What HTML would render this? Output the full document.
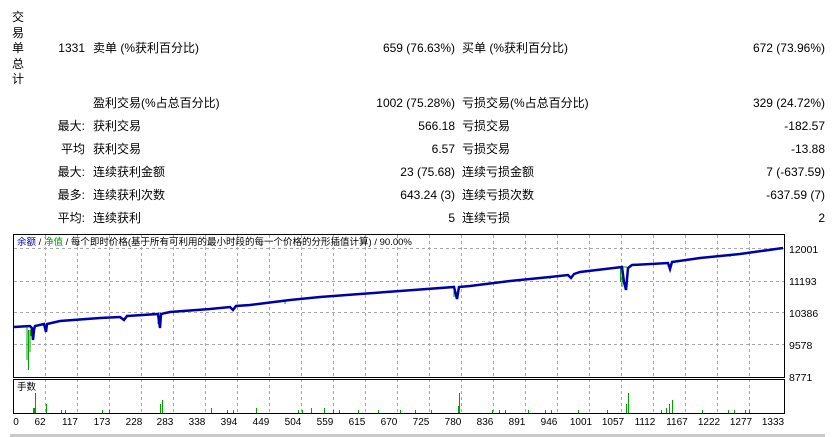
<!DOCTYPE html>
<html><head><meta charset="utf-8"><style>
body{margin:0;width:835px;height:437px;background:#fff;overflow:hidden;position:relative;font-family:"Liberation Sans","Noto Sans CJK SC",sans-serif;font-size:12px;color:#000}
.t{position:absolute;white-space:nowrap;line-height:14px}
.r{text-align:right}
</style></head><body>
<div class="t" style="left:12px;top:10px;width:14px;line-height:15.5px">交<br>易<br>单<br>总<br>计</div>

<div class="t r" style="right:750px;top:41px">1331</div>
<div class="t" style="left:93px;top:41px">卖单 (%获利百分比)</div>
<div class="t r" style="right:380px;top:41px">659 (76.63%)</div>
<div class="t" style="left:462px;top:41px">买单 (%获利百分比)</div>
<div class="t r" style="right:10px;top:41px">672 (73.96%)</div>

<div class="t" style="left:93px;top:96px">盈利交易(%占总百分比)</div>
<div class="t r" style="right:380px;top:96px">1002 (75.28%)</div>
<div class="t" style="left:462px;top:96px">亏损交易(%占总百分比)</div>
<div class="t r" style="right:10px;top:96px">329 (24.72%)</div>

<div class="t r" style="right:750px;top:119px">最大:</div>
<div class="t" style="left:93px;top:119px">获利交易</div>
<div class="t r" style="right:380px;top:119px">566.18</div>
<div class="t" style="left:462px;top:119px">亏损交易</div>
<div class="t r" style="right:10px;top:119px">-182.57</div>

<div class="t r" style="right:750px;top:142px">平均</div>
<div class="t" style="left:93px;top:142px">获利交易</div>
<div class="t r" style="right:380px;top:142px">6.57</div>
<div class="t" style="left:462px;top:142px">亏损交易</div>
<div class="t r" style="right:10px;top:142px">-13.88</div>

<div class="t r" style="right:750px;top:165px">最大:</div>
<div class="t" style="left:93px;top:165px">连续获利金额</div>
<div class="t r" style="right:380px;top:165px">23 (75.68)</div>
<div class="t" style="left:462px;top:165px">连续亏损金额</div>
<div class="t r" style="right:10px;top:165px">7 (-637.59)</div>

<div class="t r" style="right:750px;top:188px">最多:</div>
<div class="t" style="left:93px;top:188px">连续获利次数</div>
<div class="t r" style="right:380px;top:188px">643.24 (3)</div>
<div class="t" style="left:462px;top:188px">连续亏损次数</div>
<div class="t r" style="right:10px;top:188px">-637.59 (7)</div>

<div class="t r" style="right:750px;top:211px">平均:</div>
<div class="t" style="left:93px;top:211px">连续获利</div>
<div class="t r" style="right:380px;top:211px">5</div>
<div class="t" style="left:462px;top:211px">连续亏损</div>
<div class="t r" style="right:10px;top:211px">2</div>

<svg style="position:absolute;left:0;top:0" width="835" height="437">
<g stroke="#a8a8a8" stroke-dasharray="3,3" stroke-width="1" fill="none">
<path d="M14 248.5H784M14 281.5H784M14 312.5H784M14 344.5H784"/>
<path d="M45.5 235V413M77.5 235V413M109.5 235V413M141.5 235V413M173.5 235V413M205.5 235V413M237.5 235V413M269.5 235V413M301.5 235V413M333.5 235V413M365.5 235V413M397.5 235V413M429.5 235V413M461.5 235V413M493.5 235V413M525.5 235V413M557.5 235V413M589.5 235V413M621.5 235V413M653.5 235V413M685.5 235V413M717.5 235V413M749.5 235V413"/>
</g>
<rect x="14" y="378" width="770" height="1" fill="#fff"/>
<rect x="13.5" y="234.5" width="771" height="143" fill="none" stroke="#000"/>
<rect x="13.5" y="379.5" width="771" height="34" fill="none" stroke="#000"/>
<!-- equity green spikes -->
<g fill="none" stroke="#00a000" stroke-width="1">
<path d="M27 327V360M28.5 330V370M30 330V352M31 328V336"/>
<path d="M158 314V324"/>
<path d="M454 288V297"/>
<path d="M620.5 267V282M622 270V287M623 267H627"/>
<path d="M285 301V304M550 276V279M730 254V257"/>
</g>
<!-- balance blue -->
<polyline fill="none" stroke="#0000aa" stroke-width="2.5" points="14,327 30,326 32,328 33,340 34,330 35,326 44,324 46,332 47,324 60,321 100,318 120,317 124,320 127,316 158,314 160,328 161,314 170,312 210,309 230,307 233,310 236,306 250,305 290,300 320,297 360,294 400,291 454,287 457,299 459,287 470,286 510,281 550,277 568,275 571,278 574,274 580,272 622,267 624,282 626,290 628,268 632,265 668,263 670,269 672,262 700,258 740,254 783,248"/>
<!-- volume bars -->
<g fill="#00a000">
<rect x="33" y="408" width="2" height="5"/><rect x="35" y="393" width="1" height="20"/><rect x="46" y="404" width="1" height="9"/><rect x="61" y="410" width="1" height="3"/><rect x="65" y="410" width="1" height="3"/><rect x="102" y="410" width="1" height="3"/><rect x="109" y="410" width="1" height="3"/><rect x="160" y="404" width="1" height="9"/><rect x="162" y="400" width="1" height="13"/><rect x="211" y="408" width="1" height="5"/><rect x="227" y="410" width="1" height="3"/><rect x="233" y="410" width="1" height="3"/><rect x="256" y="408" width="1" height="5"/><rect x="298" y="410" width="1" height="3"/><rect x="302" y="410" width="1" height="3"/><rect x="311" y="408" width="1" height="5"/><rect x="324" y="408" width="1" height="5"/><rect x="333" y="410" width="1" height="3"/><rect x="339" y="410" width="1" height="3"/><rect x="358" y="410" width="1" height="3"/><rect x="378" y="410" width="1" height="3"/><rect x="400" y="410" width="1" height="3"/><rect x="415" y="410" width="1" height="3"/><rect x="431" y="410" width="1" height="3"/><rect x="458" y="406" width="1" height="7"/><rect x="459" y="393" width="1" height="20"/><rect x="492" y="410" width="1" height="3"/><rect x="499" y="410" width="1" height="3"/><rect x="505" y="410" width="1" height="3"/><rect x="528" y="410" width="1" height="3"/><rect x="545" y="410" width="1" height="3"/><rect x="551" y="410" width="1" height="3"/><rect x="578" y="410" width="1" height="3"/><rect x="607" y="410" width="1" height="3"/><rect x="626" y="404" width="1" height="9"/><rect x="628" y="393" width="1" height="20"/><rect x="661" y="410" width="1" height="3"/><rect x="666" y="408" width="1" height="5"/><rect x="669" y="404" width="1" height="9"/><rect x="672" y="400" width="1" height="13"/><rect x="702" y="410" width="1" height="3"/><rect x="728" y="410" width="1" height="3"/><rect x="734" y="410" width="1" height="3"/><rect x="745" y="410" width="1" height="3"/><rect x="749" y="410" width="1" height="3"/>
</g>
<g font-family="Liberation Sans,Noto Sans CJK SC,sans-serif" font-size="9.5">
<text x="17" y="245"><tspan fill="#0000aa">余额</tspan> / <tspan fill="#00a000">净值</tspan> / 每个即时价格(基于所有可利用的最小时段的每一个价格的分形插值计算) / 90.00%</text>
<text x="17" y="390">手数</text>
</g>
<g font-family="Liberation Sans,sans-serif" font-size="10.5" fill="#000">
<text x="789" y="253">12001</text><text x="789" y="285">11193</text><text x="789" y="317">10386</text><text x="789" y="349">9578</text><text x="789" y="381">8771</text>
</g>
<g font-family="Liberation Sans,sans-serif" font-size="10" text-anchor="middle">
<text x="16" y="425">0</text><text x="40" y="425">62</text><text x="70" y="425">117</text><text x="102" y="425">173</text><text x="134" y="425">228</text><text x="165" y="425">283</text><text x="197" y="425">338</text><text x="229" y="425">394</text><text x="261" y="425">449</text><text x="293" y="425">504</text><text x="325" y="425">559</text><text x="357" y="425">615</text><text x="389" y="425">670</text><text x="421" y="425">725</text><text x="453" y="425">780</text><text x="485" y="425">836</text><text x="517" y="425">891</text><text x="549" y="425">946</text><text x="581" y="425">1001</text><text x="613" y="425">1057</text><text x="645" y="425">1112</text><text x="677" y="425">1167</text><text x="709" y="425">1222</text><text x="741" y="425">1277</text><text x="773" y="425">1333</text>
</g>
<rect x="10" y="434" width="815" height="3" fill="#c8c8c8"/>
</svg>
</body></html>
